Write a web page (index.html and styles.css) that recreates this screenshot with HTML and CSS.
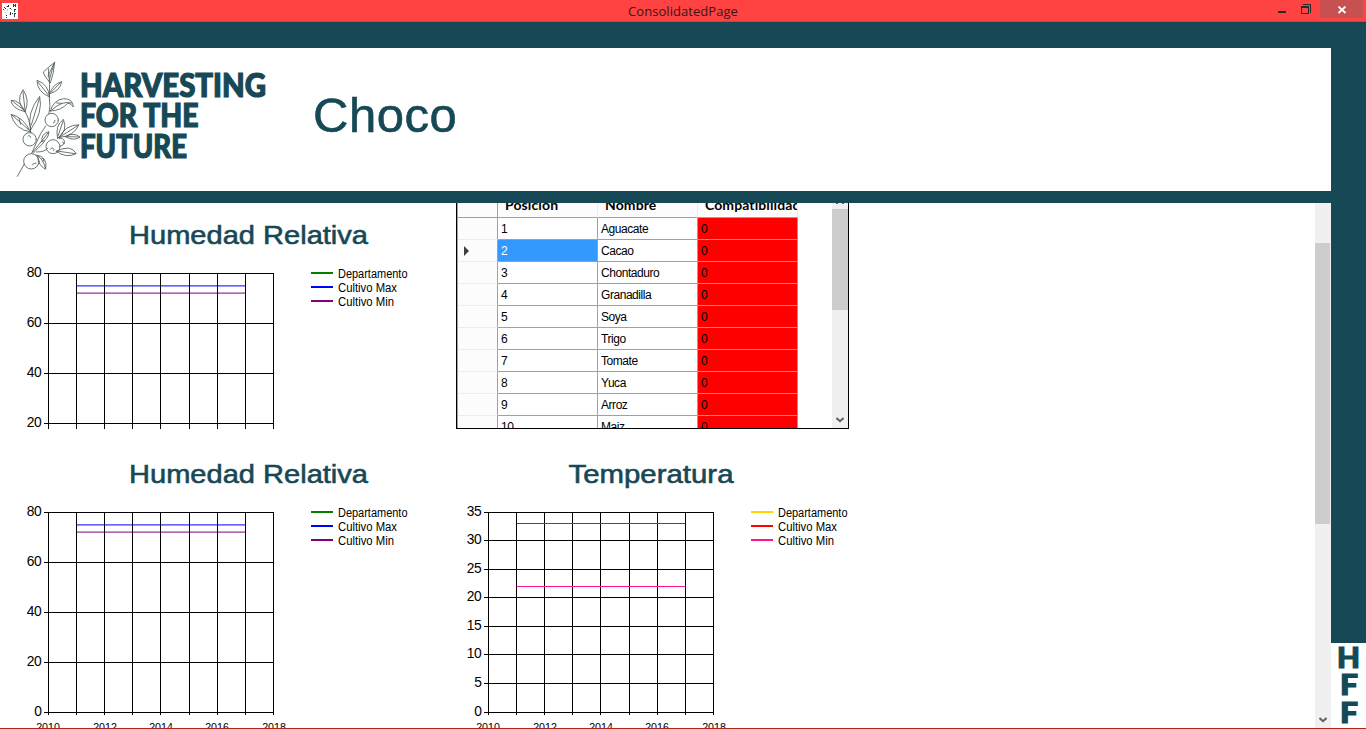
FILE: index.html
```html
<!DOCTYPE html>
<html lang="es">
<head>
<meta charset="utf-8">
<title>ConsolidatedPage</title>
<link rel="stylesheet" href="styles.css">
</head>
<body>
<div class="window">
  <header class="titlebar">
    <svg class="app-icon" viewBox="0 0 16 16" shape-rendering="crispEdges">
      <rect width="16" height="16" fill="#fff"/>
      <path fill="#174855" d="M11 1h1v3h-1zM13 1h1v3h-1zM12 2h1v1h-1zM12 6h1v3h-1zM13 6h1v1h-1zM12 10h1v4h-1zM13 10h1v1h-1z"/>
      <path fill="#333" d="M6 2h1v2h-1zM5 3h1v1h-1zM2 4h1v1h-1zM1 6h1v1h-1zM3 5h1v1h-1zM8 5h1v1h-1zM8 9h1v3h-1zM4 12h1v1h-1zM4 14h1v1h-1zM10 10h1v1h-1z"/>
      <path fill="#bbb" d="M4 3h1v1h-1zM5 6h1v2h-1zM2 7h1v1h-1zM7 5h1v1h-1zM9 6h1v1h-1zM7 11h1v1h-1zM3 9h1v1h-1z"/>
    </svg>
    <h1 class="caption">ConsolidatedPage</h1>
    <div class="controls">
      <svg class="min-max" viewBox="0 0 50 22" shape-rendering="crispEdges">
        <path fill="#292929" d="M8 11h8v2h-8z"/>
        <path fill="none" stroke="#292929" d="M33 4.500h7.500v8"/>
        <path fill="none" stroke="#292929" d="M31.500 6.500h7v7h-7z"/><path fill="#292929" d="M31 6h8v2h-8z"/>
      </svg>
      <div class="close"><svg viewBox="0 0 10 8"><path d="M1.500.5l7 6.500M8.500.5l-7 6.500" stroke="#fff" stroke-width="1.800"/></svg></div>
    </div>
  </header>
  <div class="frame">
    <div class="main">
      <div class="banner">
        <svg class="logo" viewBox="0 0 280 143">
          <g transform="translate(0 -48) scale(.33333)" fill="none" stroke="#4d5a58" stroke-width="2.500" stroke-linejoin="round" stroke-linecap="round">
            <path d="M52 529L73 492M95 460Q110 425 122 401L137 378M147 341Q152 318 148 292Q150 250 147 222L164 187"/>
            <path d="M164 187Q162 219 151 249Q131 226 130 216Q146 200 164 187M161 194L147 243M146 206l-1 25"/>
            <path d="M149 291Q145 252 111 241Q111 276 149 291ZM114 246L146 286M149 281Q160 251 185 245Q181 273 149 281ZM181 248L155 275"/>
            <path d="M151 333Q160 300 191 296Q219 296 220 321Q211 308 203 310Q184 332 151 333ZM155 330Q188 300 216 309M170 309l16 1"/>
            <path d="M75 335Q45 303 69 269Q91 301 75 335ZM69 276L75 330M75 335Q60 300 33 301Q35 326 75 335ZM38 304L70 329"/>
            <path d="M92 389Q79 339 119 289Q130 337 92 389ZM118 296L94 375M92 396Q70 351 33 343Q43 388 92 396ZM37 346L87 390M75 335Q91 359 92 397M57 356l5 17"/>
            <path d="M173 415Q164 377 190 358Q205 393 173 415ZM189 364L174 408M177 413Q195 375 237 374Q224 407 177 413ZM233 377L181 410M197 410Q220 395 240 411Q222 425 197 410ZM200 410L237 411"/>
            <path d="M101 458Q135 425 135 422M126 425Q121 402 147 395Q145 419 126 425ZM145 398L98 457M110 456Q135 456 143 445"/>
            <path d="M169 454Q213 431 229 461Q198 476 169 454ZM171 453L225 461M108 465Q144 469 137 508Q114 496 113 470M113 467Q129 478 136 503M126 475q7-2 4 9"/>
            <circle cx="155" cy="360" r="20"/><circle cx="89" cy="418" r="20"/><circle cx="94" cy="484" r="23"/><circle cx="159" cy="440" r="21"/><path d="M178 416a11 11 0 1 1 4 21"/>
            <path d="M160 369q6-1 5-8M84 408q7-4 8 4M97 495q1-6 11-6M151 448q6-9 11 0l-2 4M188 426q4-1 4 5"/>
          </g>
          <g class="wordmark">
            <text x="80" y="49" textLength="186" lengthAdjust="spacingAndGlyphs">HARVESTING</text>
            <text x="80" y="79" textLength="118.500" lengthAdjust="spacingAndGlyphs">FOR THE</text>
            <text x="80" y="109.500" textLength="107" lengthAdjust="spacingAndGlyphs">FUTURE</text>
          </g>
        </svg>
        <h2 class="region">Choco</h2>
      </div>
      <div class="content">
        <div class="panels">
          <svg class="chart" viewBox="0 0 440 226">
            <text class="heading" x="129" y="41" textLength="239" lengthAdjust="spacingAndGlyphs">Humedad Relativa</text>
            <path class="series" stroke="#00f" d="M77 82.800h168"/>
            <path class="series" stroke="#800080" d="M77 90.200h168"/>
            <path class="gridlines" d="M44 70.500h230M44 120.500h230M44 170.500h230M44 220.500h230M48.500 70v156M76.500 70v156M104.500 70v156M132.500 70v156M160.500 70v156M189.500 70v156M217.500 70v156M245.500 70v156M273.500 70v156"/>
            <g class="y-labels"><text x="41.500" y="74">80</text><text x="41.500" y="124">60</text><text x="41.500" y="174">40</text><text x="41.500" y="224">20</text></g>
            <g class="keys"><path stroke="#008000" d="M311 70h22"/><path stroke="#00f" d="M311 84h22"/><path stroke="#800080" d="M311 98h22"/></g>
            <g class="legend"><text x="338" y="75" textLength="69.500" lengthAdjust="spacingAndGlyphs">Departamento</text><text x="338" y="89" textLength="59" lengthAdjust="spacingAndGlyphs">Cultivo Max</text><text x="338" y="103" textLength="56" lengthAdjust="spacingAndGlyphs">Cultivo Min</text></g>
          </svg>
          <div class="ranking">
            <table class="crops">
              <thead><tr><th></th><th>Posición</th><th>Nombre</th><th>Compatibilidad</th></tr></thead>
              <tbody>
                <tr><th></th><td>1</td><td>Aguacate</td><td class="score">0</td></tr>
                <tr><th><span class="pointer"></span></th><td class="selected">2</td><td>Cacao</td><td class="score">0</td></tr>
                <tr><th></th><td>3</td><td>Chontaduro</td><td class="score">0</td></tr>
                <tr><th></th><td>4</td><td>Granadilla</td><td class="score">0</td></tr>
                <tr><th></th><td>5</td><td>Soya</td><td class="score">0</td></tr>
                <tr><th></th><td>6</td><td>Trigo</td><td class="score">0</td></tr>
                <tr><th></th><td>7</td><td>Tomate</td><td class="score">0</td></tr>
                <tr><th></th><td>8</td><td>Yuca</td><td class="score">0</td></tr>
                <tr><th></th><td>9</td><td>Arroz</td><td class="score">0</td></tr>
                <tr><th></th><td>10</td><td>Maiz</td><td class="score">0</td></tr>
              </tbody>
            </table>
            <div class="table-scroll">
              <svg class="arrow-stub" viewBox="0 0 8 1"><path d="M0 0h2v1h-2zM6 0h2v1h-2z"/></svg>
              <div class="thumb"></div>
              <svg class="arrow" viewBox="0 0 8 6"><path d="M.5 1L4 4.200 7.500 1"/></svg>
            </div>
          </div>
          <svg class="chart" viewBox="0 0 440 299">
            <text class="heading" x="129" y="54" textLength="239" lengthAdjust="spacingAndGlyphs">Humedad Relativa</text>
            <path class="series" stroke="#00f" d="M77 95.800h168"/>
            <path class="series" stroke="#800080" d="M77 103.200h168"/>
            <path class="gridlines" d="M44 83.500h230M44 133.500h230M44 183.500h230M44 233.500h230M44 283.500h230M48.500 83v203M76.500 83v203M104.500 83v203M132.500 83v203M160.500 83v203M189.500 83v203M217.500 83v203M245.500 83v203M273.500 83v203"/>
            <g class="y-labels"><text x="41.500" y="87">80</text><text x="41.500" y="137">60</text><text x="41.500" y="187">40</text><text x="41.500" y="237">20</text><text x="41.500" y="287">0</text></g>
            <g class="x-labels"><text x="48" y="302">2010</text><text x="105" y="302">2012</text><text x="161" y="302">2014</text><text x="217" y="302">2016</text><text x="274" y="302">2018</text></g>
            <g class="keys"><path stroke="#008000" d="M311 83h22"/><path stroke="#00f" d="M311 97h22"/><path stroke="#800080" d="M311 111h22"/></g>
            <g class="legend"><text x="338" y="88" textLength="69.500" lengthAdjust="spacingAndGlyphs">Departamento</text><text x="338" y="102" textLength="59" lengthAdjust="spacingAndGlyphs">Cultivo Max</text><text x="338" y="116" textLength="56" lengthAdjust="spacingAndGlyphs">Cultivo Min</text></g>
          </svg>
          <svg class="chart" viewBox="0 0 440 299">
            <text class="heading" x="128.500" y="54" textLength="165" lengthAdjust="spacingAndGlyphs">Temperatura</text>
            <path class="gridlines" d="M44 83.500h230M44 111.500h230M44 140.500h230M44 168.500h230M44 197.500h230M44 225.500h230M44 254.500h230M44 283.500h230M48.500 83v203M76.500 83v203M104.500 83v203M132.500 83v203M160.500 83v203M189.500 83v203M217.500 83v203M245.500 83v203M273.500 83v203"/>
            <path stroke="#f00" d="M76.500 94.500h169"/>
            <path stroke="#ff1493" d="M76.500 157.500h169"/>
            <g class="y-labels"><text x="41.500" y="87">35</text><text x="41.500" y="115">30</text><text x="41.500" y="144">25</text><text x="41.500" y="172">20</text><text x="41.500" y="201">15</text><text x="41.500" y="229">10</text><text x="41.500" y="258">5</text><text x="41.500" y="287">0</text></g>
            <g class="x-labels"><text x="48" y="302">2010</text><text x="105" y="302">2012</text><text x="161" y="302">2014</text><text x="217" y="302">2016</text><text x="274" y="302">2018</text></g>
            <g class="keys"><path stroke="#ffd700" d="M311 83h22"/><path stroke="#f00" d="M311 97h22"/><path stroke="#ff1493" d="M311 111h22"/></g>
            <g class="legend"><text x="338" y="88" textLength="69.500" lengthAdjust="spacingAndGlyphs">Departamento</text><text x="338" y="102" textLength="59" lengthAdjust="spacingAndGlyphs">Cultivo Max</text><text x="338" y="116" textLength="56" lengthAdjust="spacingAndGlyphs">Cultivo Min</text></g>
          </svg>
        </div>
        <div class="page-scroll">
          <div class="thumb"></div>
          <svg class="arrow" viewBox="0 0 8 6"><path d="M.5 1L4 4.200 7.500 1"/></svg>
        </div>
      </div>
    </div>
    <aside class="rail">
      <svg class="monogram" viewBox="0 0 35 85">
        <text x="17.500" y="25" textLength="23" lengthAdjust="spacingAndGlyphs">H</text>
        <text x="18" y="52" textLength="18" lengthAdjust="spacingAndGlyphs">F</text>
        <text x="18" y="79.500" textLength="18" lengthAdjust="spacingAndGlyphs">F</text>
      </svg>
    </aside>
  </div>
</div>
</body>
</html>
```
FILE: styles.css
```css
* { box-sizing: border-box; }
body { margin: 0; font-family: "Liberation Sans", Arial, sans-serif; color: #000; overflow: hidden; }
svg { display: block; }
.window { width: 1366px; height: 729px; display: flex; flex-direction: column; border-bottom: 1px solid #b0241c; }

.titlebar { height: 22px; flex: none; display: grid; grid-template-columns: 120px 1fr 120px; background: #ff4343; border-bottom: 1px solid #dc3c3e; }
.app-icon { width: 16px; height: 16px; margin: 3px 0 0 2px; }
.caption { margin: 0; text-align: center; font: 400 13px/21px "Open Sans", sans-serif; color: #3b1414; padding-top: 1px; letter-spacing: .05px; }
.controls { display: flex; padding-left: 24px; }
.min-max { width: 50px; height: 22px; }
.close { width: 43px; height: 18px; background: #c75050; display: flex; justify-content: center; padding-top: 6px; }
.close svg { width: 10px; height: 8px; }

.frame { flex: 1; display: flex; min-height: 0; background: #174855; }
.main { width: 1331px; display: flex; flex-direction: column; padding-top: 26px; }
.banner { height: 143px; flex: none; background: #fff; display: flex; }
.logo { width: 280px; height: 143px; }
.wordmark { font: 900 31.500px Lato, sans-serif; fill: #174855; stroke: #174855; stroke-width: 1.200px; }
.region { margin: 0 0 0 33px; padding-top: 40px; font-size: 49px; line-height: 55px; font-weight: 400; letter-spacing: .5px; color: #174855; -webkit-text-stroke: .6px #174855; }

.content { flex: 1; min-height: 0; margin-top: 12px; background: #fff; display: flex; justify-content: space-between; overflow: hidden; }
.panels { display: grid; grid-template-columns: 440px 440px; grid-template-rows: 226px 299px; }
.chart { width: 440px; height: 100%; overflow: hidden; }
.heading { font-size: 26.670px; fill: #174855; stroke: #174855; stroke-width: .6px; }
.gridlines { stroke: #000; stroke-width: 1px; shape-rendering: crispEdges; }
.series { stroke-width: 1.300px; opacity: .8; }
.y-labels { font-size: 13.800px; text-anchor: end; letter-spacing: -.3px; }
.x-labels { font-size: 10.670px; text-anchor: middle; }
.legend { font-size: 12px; }
.keys { stroke-width: 2px; }

.ranking { width: 393px; height: 226px; margin-left: 16px; border: solid #000; border-width: 0 1px 1px; display: flex; justify-content: space-between; overflow: hidden; }
.crops { border-collapse: separate; border-spacing: 0; table-layout: fixed; width: 341px; height: 0; border-left: 1px solid #a0a0a0; font-size: 12px; }
.crops th, .crops td { height: 22px; padding: 0; border: solid #a0a0a0; border-width: 0 1px 1px 0; }
.crops th:first-child { width: 40px; background: #fcfcfc; border-bottom-color: #e3eefb; }
.crops td { padding-left: 3px; text-align: left; background: #fff; letter-spacing: -.45px; line-height: 14px; }
.crops thead th { height: 15px; padding: 0 0 11px 7px; background: #fcfcfc; border-right-color: #e3eefb; font: 700 14px/3px "Lato", sans-serif; text-align: left; overflow: hidden; white-space: nowrap; letter-spacing: .1px; }
.crops thead th:first-child { border-color: #a0a0a0; }
.crops td.selected { background: #3399ff; color: #fff; }
.crops td.score { background: #f00; }
.pointer { display: block; margin-left: 6px; width: 0; border: solid transparent; border-width: 5px 0 5px 5px; border-left-color: #404040; }
.table-scroll { width: 16px; background: #f0f0f0; display: flex; flex-direction: column; align-items: center; }
.table-scroll .thumb { width: 100%; height: 101px; margin: 5px 0 auto; background: #cdcdcd; }
.arrow-stub { width: 8px; height: 1px; flex: none; fill: #606060; }
.arrow { width: 8px; height: 6px; margin-bottom: 5px; fill: none; stroke: #606060; stroke-width: 2px; }
.page-scroll { width: 16px; background: #f0f0f0; padding-top: 40px; display: flex; flex-direction: column; justify-content: space-between; align-items: center; }
.page-scroll .thumb { width: 15px; height: 281px; background: #cdcdcd; align-self: flex-start; }

.rail { width: 35px; display: flex; align-items: flex-end; }
.monogram { width: 35px; height: 85px; background: #fff; font: 900 28.500px Lato, sans-serif; fill: #174855; stroke: #174855; stroke-width: 1.200px; text-anchor: middle; }
```
